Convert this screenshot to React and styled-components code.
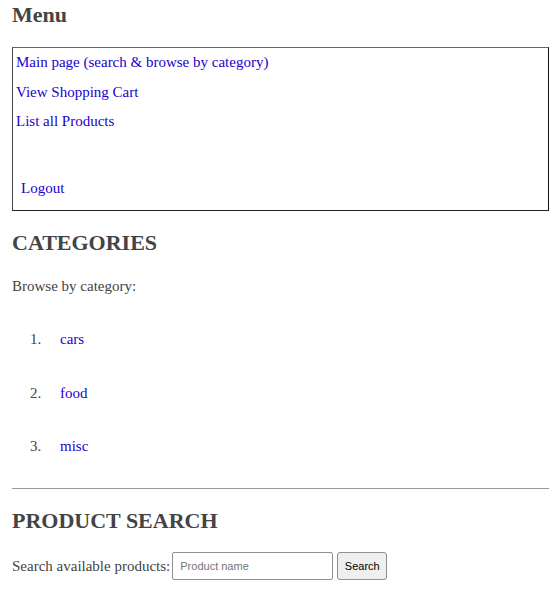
import React from "react"
import styled, { createGlobalStyle } from "styled-components"

const GlobalStyle = createGlobalStyle`
  body {
    margin: 0;
    background: #fff;
    font-family: "Liberation Serif", "Times New Roman", serif;
    font-size: 15px;
    color: #444;
  }
`

const Page = styled.div`
  width: 537px;
  margin-left: 12px;
  display: flex;
  flex-direction: column;
`

const Heading = styled.h2`
  margin: ${(p) => p.$margin || "0"};
  font-size: 22px;
  line-height: 26px;
  font-weight: bold;
  color: #444;
`

const MenuBox = styled.nav`
  display: flex;
  flex-direction: column;
  border-style: solid;
  border-width: 1px;
  border-color: #666 #111 #222 #444;
  padding: 0 0 7px 3px;
`

const MenuLink = styled.a`
  display: block;
  height: 29.5px;
  line-height: 28px;
  color: #2200cc;
  text-decoration: none;
  padding-left: ${(p) => (p.$indent ? "5px" : "0")};
  margin-top: ${(p) => (p.$gap ? "37px" : "0")};
`

const Text = styled.p`
  margin: 0;
  line-height: 20px;
`

const CategoryList = styled.ol`
  list-style: none;
  margin: 0;
  padding: 17px 0 14px 18px;
`

const CategoryItem = styled.li`
  display: flex;
  height: 53.5px;
  line-height: 53px;
`

const Num = styled.span`
  width: 30px;
`

const Link = styled.a`
  color: #2200cc;
  text-decoration: none;
`

const Rule = styled.hr`
  margin: 0;
  border: 0;
  border-top: 1px solid #999;
  height: 0;
`

const SearchRow = styled.form`
  display: flex;
  align-items: center;
`

const Input = styled.input`
  box-sizing: border-box;
  width: 161px;
  height: 28px;
  margin: 0 4px 0 2px;
  padding: 0 7px;
  border: 1px solid #8f8f8f;
  border-radius: 2px;
  font-family: "Liberation Sans", Arial, sans-serif;
  font-size: 11px;
  color: #222;
  &::placeholder {
    color: #757575;
  }
`

const Button = styled.button`
  box-sizing: border-box;
  width: 50px;
  height: 28px;
  padding: 0;
  border: 1px solid #8f8f8f;
  border-radius: 3px;
  background: #efefef;
  font-family: "Liberation Sans", Arial, sans-serif;
  font-size: 11px;
  color: #000;
`

const categories = ["cars", "food", "misc"]

export default function App() {
  return (
    <>
      <GlobalStyle />
      <Page>
        <Heading $margin="2px 0 19px">Menu</Heading>
        <MenuBox>
          <MenuLink href="#">Main page (search &amp; browse by category)</MenuLink>
          <MenuLink href="#">View Shopping Cart</MenuLink>
          <MenuLink href="#">List all Products</MenuLink>
          <MenuLink href="#" $indent $gap>Logout</MenuLink>
        </MenuBox>
        <Heading $margin="19px 0 20px">CATEGORIES</Heading>
        <Text>Browse by category:</Text>
        <CategoryList>
          {categories.map((c, i) => (
            <CategoryItem key={c}>
              <Num>{i + 1}.</Num>
              <Link href="#">{c}</Link>
            </CategoryItem>
          ))}
        </CategoryList>
        <Rule />
        <Heading $margin="19px 0 18px">PRODUCT SEARCH</Heading>
        <SearchRow onSubmit={(e) => e.preventDefault()}>
          <Text>Search available products:</Text>
          <Input placeholder="Product name" />
          <Button type="submit">Search</Button>
        </SearchRow>
      </Page>
    </>
  )
}
